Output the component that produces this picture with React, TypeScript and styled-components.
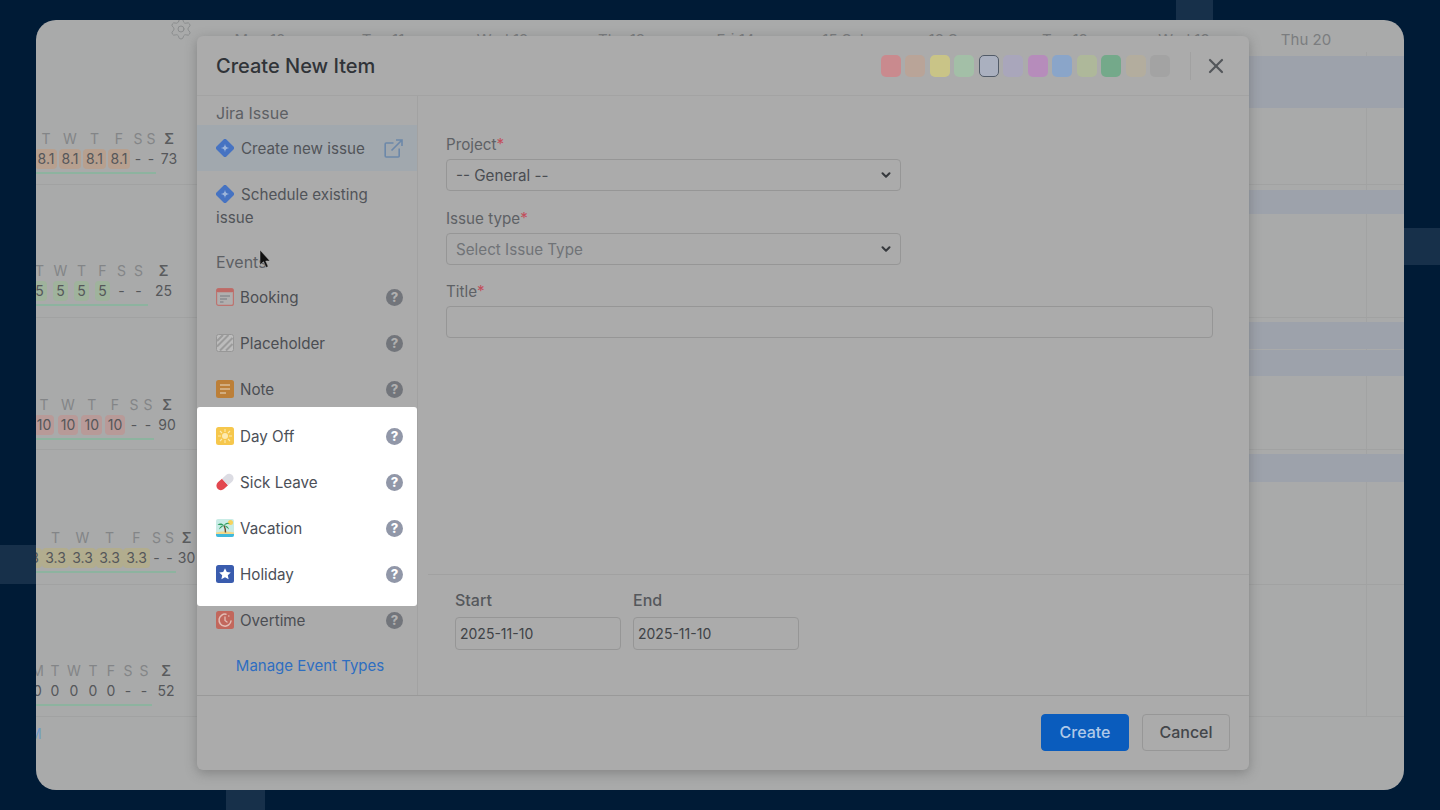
import React from "react";
import styled, { createGlobalStyle } from "styled-components";
import { ChevronDown, Settings, X } from "lucide-react";

const Global = createGlobalStyle`
  html, body { margin: 0; padding: 0; background: #001b36; }
  * { box-sizing: border-box; }
  body { font-family: Inter, "Liberation Sans", sans-serif; }
`;

const Page = styled.div`
  position: relative;
  width: 1440px;
  height: 810px;
  overflow: hidden;
  padding: 20px 36px;
  background: #001b36;
`;

const Deco = styled.div<{ $x: number; $y: number; $w: number; $h: number }>`
  position: absolute;
  left: ${(p) => p.$x}px;
  top: ${(p) => p.$y}px;
  width: ${(p) => p.$w}px;
  height: ${(p) => p.$h}px;
  background: #17304a;
`;

const Win = styled.div`
  position: relative;
  width: 1368px;
  height: 770px;
  border-radius: 20px;
  overflow: hidden;
  background: #a9aaaa;
  display: flex;
  flex-direction: column;
`;

/* ---------- background calendar ---------- */
const BoardHead = styled.div`
  height: 32px;
  flex: none;
  display: grid;
  grid-template-columns: 161px 1fr;
`;
const GearCell = styled.div`
  display: flex;
  justify-content: flex-end;
  padding: 0 4px 0 0;
  color: #8b8d8e;
  margin-top: -3px;
`;
const HeadRight = styled.div`
  margin-top: -12px;
`;
const WeekTitles = styled.div`
  display: grid;
  grid-template-columns: 702px 632px;
  height: 16px;
  font-size: 15px;
  line-height: 14px;
  color: #77797b;
  text-align: center;
  white-space: nowrap;
`;
const Days = styled.div`
  display: grid;
  grid-template-columns: 126px 120px 119px 119px 109px 107px 110px 116px 122px 122px;
  margin-top: 8px;
  font-size: 15px;
  line-height: 16px;
  color: #7b7d7f;
  text-align: center;
  white-space: nowrap;
`;

const Row = styled.div<{ $h: number }>`
  height: ${(p) => p.$h}px;
  flex: none;
  display: grid;
  grid-template-columns: 161px 1fr;
  border-bottom: 1px solid #a1a2a2;
`;
const Summary = styled.div<{ $top: number; $offset: number }>`
  padding-top: ${(p) => p.$top}px;
  margin-left: ${(p) => p.$offset}px;
  white-space: nowrap;
`;
const Cells = styled.div<{ $cols: string }>`
  display: grid;
  grid-template-columns: ${(p) => p.$cols};
  height: 20px;
  align-items: center;
  justify-items: center;
  font-size: 14px;
  line-height: 20px;
`;
const HeadCell = styled.span<{ $sum?: boolean }>`
  color: ${(p) => (p.$sum ? "#5a5c5e" : "#838587")};
  font-weight: ${(p) => (p.$sum ? 600 : 400)};
`;
const tones: Record<string, string> = {
  orange: "#b7a08f",
  green: "#9fb39c",
  red: "#b89a98",
  yellow: "#b2ad8e",
};
const ValCell = styled.span<{ $tone?: string }>`
  color: #55575a;
  padding: 0 ${(p) => (p.$tone ? 3 : 0)}px;
  border-radius: 4px;
  background: ${(p) => (p.$tone ? tones[p.$tone] : "transparent")};
`;
const Underline = styled.div<{ $w: number; $offset: number }>`
  width: ${(p) => p.$w}px;
  height: 2px;
  margin: 3px 0 0 ${(p) => -p.$offset}px;
  background: #8db39f;
`;
const Timeline = styled.div`
  background-image: linear-gradient(#a2a3a3, #a2a3a3);
  background-size: 1px 100%;
  background-position: 1169px 0;
  background-repeat: no-repeat;
`;
const Band = styled.div<{ $top: number; $h: number }>`
  margin-top: ${(p) => p.$top}px;
  height: ${(p) => p.$h}px;
  background: #9da2ab;
`;
const BoardFoot = styled.div`
  flex: 1;
  padding: 7px 0 0 0;
  margin-left: -7px;
  font-size: 14px;
  line-height: 20px;
  color: #6f9ccb;
`;

type Sum = {
  h: number;
  top: number;
  offset: number;
  cols: string;
  heads: string[];
  vals: string[];
  tone?: string;
  line: number;
  bands: [number, number][];
};
const sums: Sum[] = [
  {
    h: 133, top: 77, offset: -2, cols: "24px 24px 25px 24px 14px 12px 24px",
    heads: ["T", "W", "T", "F", "S", "S", "Σ"],
    vals: ["8.1", "8.1", "8.1", "8.1", "-", "-", "73"], tone: "orange", line: 120,
    bands: [[4, 52]],
  },
  {
    h: 133, top: 76, offset: -7, cols: "21px 21px 21px 21px 17px 17px 33px",
    heads: ["T", "W", "T", "F", "S", "S", "Σ"],
    vals: ["5", "5", "5", "5", "-", "-", "25"], tone: "green", line: 112,
    bands: [[5, 24]],
  },
  {
    h: 132, top: 77, offset: -4, cols: "24px 24px 23.5px 23px 15px 13px 25px",
    heads: ["T", "W", "T", "F", "S", "S", "Σ"],
    vals: ["10", "10", "10", "10", "-", "-", "90"], tone: "red", line: 118,
    bands: [[4, 27], [1, 26]],
  },
  {
    h: 135, top: 78, offset: -21, cols: "27px 27px 27px 27px 27px 13px 13px 21px",
    heads: ["M", "T", "W", "T", "F", "S", "S", "Σ"],
    vals: ["3.3", "3.3", "3.3", "3.3", "3.3", "-", "-", "30"], tone: "yellow", line: 140,
    bands: [[4, 28]],
  },
  {
    h: 132, top: 76, offset: -7, cols: "17px 18px 20px 18px 18px 16px 16px 28px",
    heads: ["M", "T", "W", "T", "F", "S", "S", "Σ"],
    vals: ["0", "0", "0", "0", "0", "-", "-", "52"], line: 116,
    bands: [],
  },
];

/* ---------- modal ---------- */
const Modal = styled.div`
  position: absolute;
  left: 161px;
  top: 16px;
  width: 1052px;
  height: 734px;
  display: flex;
  flex-direction: column;
  border-radius: 6px;
  background: #ababab;
  box-shadow: 0 3px 12px rgba(60, 60, 60, 0.35);
`;
const ModalHead = styled.header`
  height: 60px;
  flex: none;
  display: flex;
  align-items: center;
  padding: 0 21px 0 19px;
  border-bottom: 1px solid #a3a3a3;
`;
const Title = styled.h1`
  margin: 0;
  font-size: 20px;
  font-weight: 500;
  color: #303338;
  flex: 1;
`;
const Swatches = styled.div`
  display: grid;
  grid-template-columns: repeat(12, 20px);
  column-gap: 4.5px;
  margin-top: 1px;
`;
const Swatch = styled.span<{ $c: string; $on?: boolean }>`
  height: 22px;
  border-radius: 5px;
  background: ${(p) => p.$c};
  border: ${(p) => (p.$on ? "1px solid #525b68" : "none")};
`;
const HeadDivider = styled.span`
  width: 1px;
  height: 28px;
  margin: 0 13px 0 20px;
  background: #a1a1a1;
`;
const CloseBtn = styled.button`
  width: 24px;
  height: 24px;
  padding: 0;
  border: none;
  background: none;
  color: #53565a;
  display: flex;
  align-items: center;
  justify-content: center;
`;
const ModalBody = styled.div`
  flex: 1;
  display: flex;
  min-height: 0;
`;
const Side = styled.aside`
  width: 221px;
  flex: none;
  border-right: 1px solid #a2a2a2;
  font-size: 15.2px;
  color: #4b4e53;
`;
const SideTitle = styled.div<{ $top?: number }>`
  margin-top: ${(p) => p.$top ?? 0}px;
  padding-left: 19px;
  height: 24px;
  line-height: 24px;
  font-size: 16px;
  color: #5d6064;
`;
const JiraRow = styled.div<{ $active?: boolean }>`
  height: 46px;
  display: flex;
  align-items: center;
  padding: 0 14px 0 19px;
  gap: 7px;
  background: ${(p) => (p.$active ? "#a1a8ae" : "transparent")};
  span { flex: 1; color: #515459; }
`;
const JiraWrap = styled.div`
  padding: 12px 40px 21px 19px;
  line-height: 23px;
  color: #515459;
  svg { vertical-align: -3px; margin-right: 7px; }
`;
const EventRow = styled.div`
  height: 46px;
  display: flex;
  align-items: center;
  gap: 6px;
  padding: 0 14px 0 19px;
  span:first-of-type { flex: 1; }
`;
const Spotlight = styled.div`
  position: relative;
  z-index: 1;
  margin: -5px -1px -9px 0;
  padding: 6px 0 9px;
  width: 220px;
  background: #ffffff;
  border-radius: 3px;
  color: #4c5058;
`;
const Help = styled.span<{ $bright?: boolean }>`
  width: 17px;
  height: 17px;
  flex: none;
  border-radius: 50%;
  display: flex;
  align-items: center;
  justify-content: center;
  font-size: 13px;
  font-weight: 800;
  line-height: 1;
  background: ${(p) => (p.$bright ? "#9197a8" : "#72757b")};
  color: ${(p) => (p.$bright ? "#ffffff" : "#b0b0b0")};
`;
const Manage = styled.a`
  display: block;
  margin-top: 12px;
  padding-left: 6px;
  text-align: center;
  font-size: 15px;
  line-height: 22px;
  color: #2e6ec1;
`;
const Main = styled.main`
  flex: 1;
  min-width: 0;
  display: flex;
  flex-direction: column;
`;
const Form = styled.div`
  flex: 1;
  padding: 37px 36px 0 28px;
  display: flex;
  flex-direction: column;
  gap: 15.5px;
`;
const FieldLabel = styled.label`
  display: block;
  height: 24px;
  line-height: 24px;
  margin-bottom: 2px;
  font-size: 15.2px;
  color: #5e6165;
  b { font-weight: 400; color: #c2505d; }
`;
const SelectWrap = styled.div`
  position: relative;
  width: 455px;
  color: #36393d;
  svg { position: absolute; right: 8px; top: 9px; pointer-events: none; }
`;
const Select = styled.select<{ $muted?: boolean }>`
  appearance: none;
  width: 100%;
  height: 32px;
  padding: 1px 9px 0;
  border: 1px solid #969696;
  border-radius: 4px;
  background: #ababab;
  font: 15.2px Inter, sans-serif;
  color: ${(p) => (p.$muted ? "#707377" : "#4a4d52")};
`;
const TextInput = styled.input`
  display: block;
  width: 100%;
  height: 32px;
  padding: 0 10px;
  border: 1px solid #969696;
  border-radius: 4px;
  background: #ababab;
`;
const Dates = styled.div`
  height: 121px;
  flex: none;
  margin-left: 10px;
  padding: 13px 0 0 27px;
  border-top: 1px solid #a1a1a1;
  display: flex;
  gap: 12px;
`;
const DateField = styled.div`
  width: 166px;
`;
const DateLabel = styled.div`
  height: 24px;
  line-height: 24px;
  margin-bottom: 5px;
  font-size: 16px;
  font-weight: 500;
  color: #55585c;
`;
const DateInput = styled.input`
  display: block;
  width: 100%;
  height: 33px;
  padding: 0 4px;
  border: 1px solid #969696;
  border-radius: 4px;
  background: #ababab;
  font: 14px Inter, sans-serif;
  color: #404347;
`;
const ModalFoot = styled.footer`
  height: 75px;
  flex: none;
  border-top: 1px solid #999999;
  padding: 18px 19px 0 0;
  display: flex;
  justify-content: flex-end;
  align-items: flex-start;
  gap: 13px;
`;
const Btn = styled.button<{ $primary?: boolean }>`
  width: 88px;
  height: 37px;
  padding: 0 0 2px;
  border-radius: 4px;
  font: 500 16px Inter, sans-serif;
  border: 1px solid ${(p) => (p.$primary ? "#0a5cbd" : "#979797")};
  background: ${(p) => (p.$primary ? "#0a5cbd" : "#ababab")};
  color: ${(p) => (p.$primary ? "#b0c9e8" : "#43464a")};
`;
const Cursor = styled.svg`
  position: absolute;
  left: 223px;
  top: 230px;
  z-index: 3;
`;

/* ---------- icons ---------- */
const Diamond = () => (
  <svg width="18" height="18" viewBox="0 0 18 18">
    <rect x="2" y="2" width="14" height="14" rx="2" transform="rotate(45 9 9)" fill="#4673c2" />
    <path d="M9 4.800C9.400 7.700 10.300 8.600 13.200 9 10.300 9.400 9.400 10.300 9 13.200 8.600 10.300 7.700 9.400 4.800 9 7.700 8.600 8.600 7.700 9 4.800Z" fill="#9db5da" />
  </svg>
);
const ExternalIcon = () => (
  <svg width="19" height="19" viewBox="0 0 19 19" fill="none" stroke="#6c88a9" strokeWidth="1.6">
    <path d="M9.500 4H2.200a1 1 0 0 0-1 1v12a1 1 0 0 0 1 1h12a1 1 0 0 0 1-1V9.500" />
    <path d="M7.500 11.500 17.500 1.500M12 1h6v6" />
  </svg>
);
const BookingIcon = () => (
  <svg width="18" height="18" viewBox="0 0 18 18">
    <rect x=".6" y=".6" width="16.800" height="16.800" rx="2" fill="#b0afaf" stroke="#bd7470" strokeWidth="1.200" />
    <rect x=".6" y=".6" width="16.800" height="3.600" rx="1.500" fill="#bd6a66" />
    <path d="M4 8h10M4 11h7M4 14h3.500" stroke="#777a80" strokeWidth="1.200" />
  </svg>
);
const PlaceholderIcon = () => (
  <svg width="18" height="18" viewBox="0 0 18 18">
    <rect x=".5" y=".5" width="17" height="17" rx="2" fill="#bcbcbc" stroke="#979797" />
    <path d="M1 7 7 1M1 12.500 12.500 1M4 16.500 16.500 4M10 16.500l6.500-6.500" stroke="#9b9b9b" strokeWidth="2" />
  </svg>
);
const NoteIcon = () => (
  <svg width="18" height="18" viewBox="0 0 18 18">
    <rect width="18" height="18" rx="2.500" fill="#bc7f38" />
    <path d="M4 5h10M4 9h10M4 13h6" stroke="#d9bd97" strokeWidth="1.600" />
  </svg>
);
const SunIcon = () => (
  <svg width="18" height="18" viewBox="0 0 18 18">
    <rect width="18" height="18" rx="2.500" fill="#f6c74c" />
    <circle cx="9" cy="9" r="3" fill="#fdeab0" />
    <path d="M9 2v3M9 13v3M2 9h3M13 9h3M4 4l2 2M12 12l2 2M14 4l-2 2M6 12l-2 2" stroke="#fdeab0" strokeWidth="1.100" />
  </svg>
);
const PillIcon = () => (
  <svg width="18" height="18" viewBox="0 0 18 18">
    <g transform="rotate(-42 9 9)">
      <path d="M9 4.500H3.500a4.500 4.500 0 0 0 0 9H9Z" fill="#e2474f" />
      <path d="M9 4.500h5.500a4.500 4.500 0 0 1 0 9H9Z" fill="#dcdce3" />
    </g>
  </svg>
);
const PalmIcon = () => (
  <svg width="18" height="18" viewBox="0 0 18 18">
    <rect width="18" height="18" rx="2" fill="#c9ece6" />
    <circle cx="14.500" cy="3.500" r="2.500" fill="#f7d25c" />
    <path d="M0 14h18v2a2 2 0 0 1-2 2H2a2 2 0 0 1-2-2Z" fill="#3fb8dc" />
    <path d="M0 13.500c5-1.500 12-1.500 18 0V15H0Z" fill="#f2d98a" />
    <path d="M9.500 13.500C9.500 10.500 9 8.500 8 6.500" stroke="#6c4a2c" strokeWidth="1.400" fill="none" />
    <path d="M8 6.500C6 4 3.500 4 1.500 6 4 5.800 6 6 8 6.500ZM8 6.500C9 4 11.500 3 14 4.500 11.500 4.800 9.500 5.500 8 6.500ZM8 6.500C5.500 6.500 3.500 8 3 10.500 5 8.500 6.500 7.500 8 6.500ZM8 6.500C10.500 6.500 12.500 8 13 10.500 11 8.500 9.500 7.500 8 6.500Z" fill="#2c9c5c" />
  </svg>
);
const StarIcon = () => (
  <svg width="18" height="18" viewBox="0 0 18 18">
    <rect width="18" height="18" rx="2.500" fill="#3a5cae" />
    <path d="m9 3.300 1.800 3.700 4 .5-3 2.800.8 4L9 12.300l-3.600 2 .8-4-3-2.800 4-.5Z" fill="#fff" strokeLinejoin="round" />
  </svg>
);
const OvertimeIcon = () => (
  <svg width="18" height="18" viewBox="0 0 18 18" fill="none">
    <rect width="18" height="18" rx="2.500" fill="#c2675c" />
    <path d="M10 3.200A6 6 0 1 0 15 10" stroke="#e3bdb5" strokeWidth="1.500" strokeLinecap="round" />
    <path d="M9 6v3.500l2 1.500" stroke="#e3bdb5" strokeWidth="1.300" strokeLinecap="round" />
    <circle cx="12.800" cy="5" r=".8" fill="#e3bdb5" />
  </svg>
);

const swatches = ["#c98a8e", "#b9a498", "#c9c487", "#a3bfa7", "#aab0bf", "#a9a6bb", "#b68cbb", "#8aa5c9", "#aeb89a", "#74a98a", "#b3ad9e", "#a3a3a3"];
const dayNames = ["Mon 10", "Tue 11", "Wed 12", "Thu 13", "Fri 14", "15 Sat", "16 Sun", "Tue 18", "Wed 19", "Thu 20"];

const Evt = ({ icon, label, bright }: { icon: React.ReactNode; label: string; bright?: boolean }) => (
  <EventRow>
    {icon}
    <span>{label}</span>
    <Help $bright={bright}>?</Help>
  </EventRow>
);

const Field = ({ label, children }: { label: string; children: React.ReactNode }) => (
  <div>
    <FieldLabel>
      {label}
      <b>*</b>
    </FieldLabel>
    {children}
  </div>
);

export default function App() {
  return (
    <Page>
      <Global />
      <Deco $x={1176} $y={0} $w={37} $h={20} />
      <Deco $x={0} $y={545} $w={36} $h={39} />
      <Deco $x={226} $y={790} $w={39} $h={20} />
      <Deco $x={1404} $y={228} $w={36} $h={37} />
      <Win>
        <BoardHead>
          <GearCell>
            <Settings size={24} strokeWidth={1} />
          </GearCell>
          <HeadRight>
            <WeekTitles>
              <span>November 10 - 16 2025</span>
              <span>November 17 - 23 2025</span>
            </WeekTitles>
            <Days>
              {dayNames.map((d) => (
                <span key={d}>{d}</span>
              ))}
            </Days>
          </HeadRight>
        </BoardHead>
        {sums.map((s, i) => (
          <Row key={i} $h={s.h}>
            <Summary $top={s.top} $offset={s.offset}>
              <Cells $cols={s.cols}>
                {s.heads.map((h, j) => (
                  <HeadCell key={j} $sum={h === "Σ"}>{h}</HeadCell>
                ))}
              </Cells>
              <Cells $cols={s.cols}>
                {s.vals.map((v, j) => (
                  <ValCell key={j} $tone={v !== "-" && j < s.vals.length - 1 ? s.tone : undefined}>{v}</ValCell>
                ))}
              </Cells>
              <Underline $w={s.line} $offset={s.offset} />
            </Summary>
            <Timeline>
              {s.bands.map(([t, h], j) => (
                <Band key={j} $top={t} $h={h} />
              ))}
            </Timeline>
          </Row>
        ))}
        <BoardFoot>M</BoardFoot>

        <Modal>
          <ModalHead>
            <Title>Create New Item</Title>
            <Swatches>
              {swatches.map((c, i) => (
                <Swatch key={c} $c={c} $on={i === 4} />
              ))}
            </Swatches>
            <HeadDivider />
            <CloseBtn aria-label="Close">
              <X size={24} strokeWidth={2.2} />
            </CloseBtn>
          </ModalHead>
          <ModalBody>
            <Side>
              <SideTitle $top={5}>Jira Issue</SideTitle>
              <JiraRow $active>
                <Diamond />
                <span>Create new issue</span>
                <ExternalIcon />
              </JiraRow>
              <JiraWrap>
                <Diamond />
                Schedule existing issue
              </JiraWrap>
              <SideTitle>Events</SideTitle>
              <Evt icon={<BookingIcon />} label="Booking" />
              <Evt icon={<PlaceholderIcon />} label="Placeholder" />
              <Evt icon={<NoteIcon />} label="Note" />
              <Spotlight>
                <Evt bright icon={<SunIcon />} label="Day Off" />
                <Evt bright icon={<PillIcon />} label="Sick Leave" />
                <Evt bright icon={<PalmIcon />} label="Vacation" />
                <Evt bright icon={<StarIcon />} label="Holiday" />
              </Spotlight>
              <Evt icon={<OvertimeIcon />} label="Overtime" />
              <Manage>Manage Event Types</Manage>
            </Side>
            <Main>
              <Form>
                <Field label="Project">
                  <SelectWrap>
                    <Select defaultValue="general">
                      <option value="general">-- General --</option>
                    </Select>
                    <ChevronDown size={14} strokeWidth={3.5} />
                  </SelectWrap>
                </Field>
                <Field label="Issue type">
                  <SelectWrap>
                    <Select $muted defaultValue="none">
                      <option value="none">Select Issue Type</option>
                    </Select>
                    <ChevronDown size={14} strokeWidth={3.5} />
                  </SelectWrap>
                </Field>
                <Field label="Title">
                  <TextInput />
                </Field>
              </Form>
              <Dates>
                <DateField>
                  <DateLabel>Start</DateLabel>
                  <DateInput readOnly value="2025-11-10" />
                </DateField>
                <DateField>
                  <DateLabel>End</DateLabel>
                  <DateInput readOnly value="2025-11-10" />
                </DateField>
              </Dates>
            </Main>
          </ModalBody>
          <ModalFoot>
            <Btn $primary>Create</Btn>
            <Btn>Cancel</Btn>
          </ModalFoot>
        </Modal>
        <Cursor width="11" height="18" viewBox="0 0 11 18">
          <path d="M1 0v15l3.500-3.300L7 17.500l2.200-1-2.500-5.500H11Z" fill="#111" stroke="#bbb" strokeWidth=".5" />
        </Cursor>
      </Win>
    </Page>
  );
}
